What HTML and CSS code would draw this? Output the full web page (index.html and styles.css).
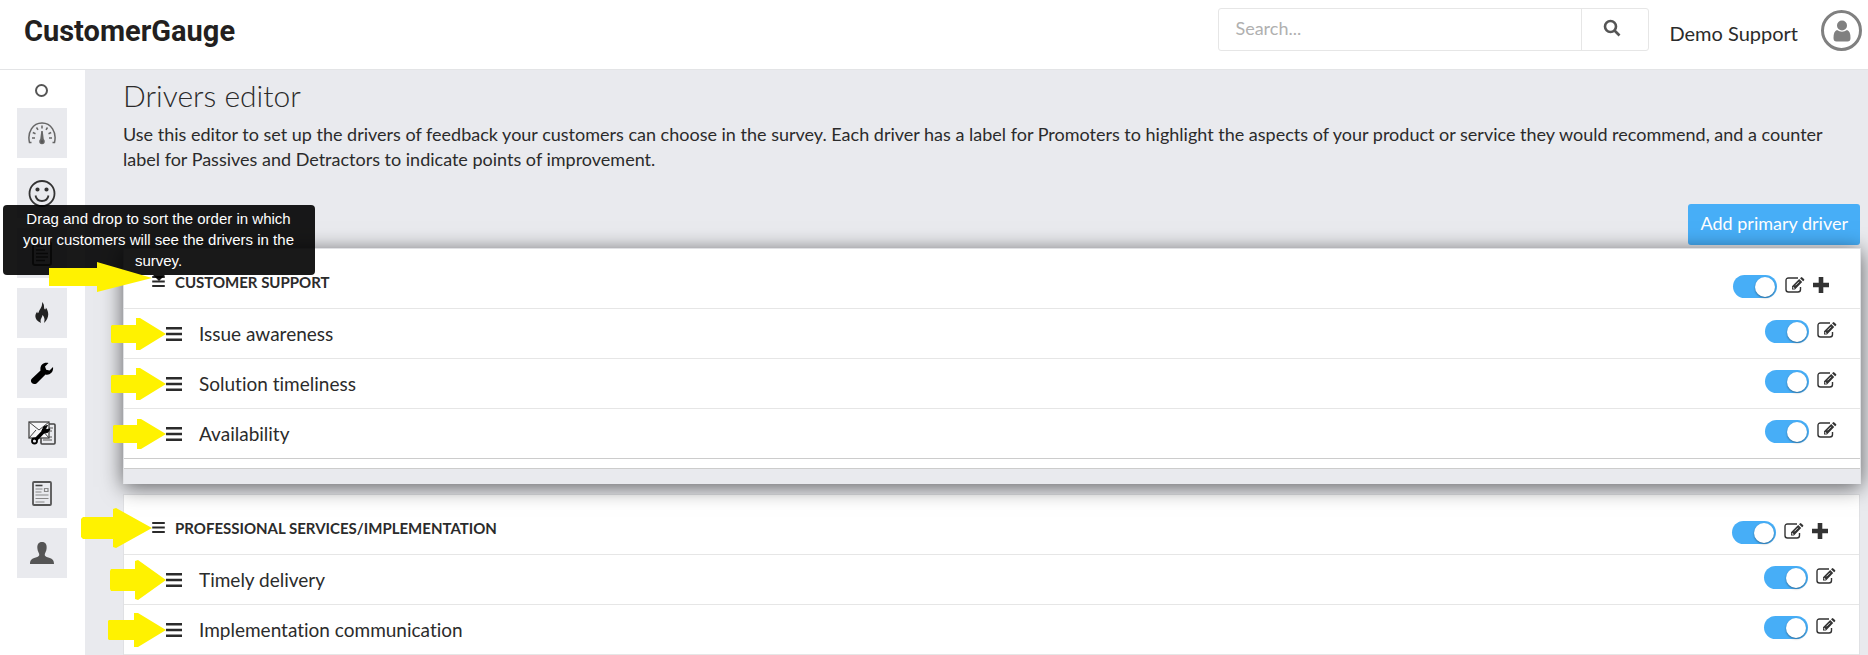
FILE: index.html
```html
<!DOCTYPE html>
<html lang="en">
<head>
    <meta charset="UTF-8">
    <meta name="viewport" content="width=device-width, initial-scale=1.0">
    <title>Drivers editor - CustomerGauge</title>
    <link rel="stylesheet" href="styles.css">
</head>
<body>
    <!-- shared icons -->
    <svg class="sprite" aria-hidden="true">
        <symbol id="icon-bars" viewBox="0 0 16 14">
            <path d="M0 0h16v2.600H0zM0 5.700h16v2.600H0zM0 11.400h16V14H0z"/>
        </symbol>
        <symbol id="icon-edit" viewBox="0 0 20 16">
            <path d="M13 1H3.500Q1 1 1 3.500v9Q1 15 3.500 15H13q2.500 0 2.500-2.500V10" fill="none" stroke="currentColor" stroke-width="1.400"/>
            <path d="M7 12.500V9.300L14.200 2l3 3-7.200 7.500zM15 1.300l.9-.9q.7-.6 1.400 0l1.700 1.600q.6.700 0 1.400l-.9.900z"/>
            <path d="M8.300 9.900v1.400h1.300M10.500 8.300l3.500-3.500" fill="none" stroke="#fff" stroke-width=".8"/>
        </symbol>
        <symbol id="icon-plus" viewBox="0 0 16 16">
            <path d="M5.700 0h4.600v5.700H16v4.600h-5.700V16H5.700v-5.700H0V5.700h5.700z"/>
        </symbol>
    </svg>

    <header class="header">
        <a href="#" class="logo">CustomerGauge</a>
        <form class="search" role="search">
            <input type="text" placeholder="Search..." aria-label="Search">
            <button type="button" aria-label="Search">
                <svg width="18" height="18" viewBox="0 0 18 18" fill="none" stroke="#555" stroke-width="2.600"><circle cx="7.500" cy="7.500" r="5.500"/><path d="M11.500 11.500l5 5"/></svg>
            </button>
        </form>
        <span class="user-name">Demo Support</span>
        <a href="#" class="avatar" aria-label="Profile">
            <svg width="18" height="22" viewBox="0 0 18 22"><circle cx="9" cy="5.500" r="5"/><path d="M4 10q5 3.500 10 0 3.500 1 3.500 8 0 3.500-3 3.500h-11q-3 0-3-3.500 0-7 3.500-8z"/></svg>
        </a>
    </header>

    <div class="layout">
        <nav class="sidebar">
            <a href="#" class="dot" aria-label="Collapse menu"></a>
            <a href="#" class="nav-item" aria-label="Dashboard">
                <svg width="28" height="28" viewBox="0 0 28 28" fill="none" stroke="#666" stroke-width="1.500"><path d="M3.500 23.500H1.500C-1 13 5 4 14 4s15 9 12.500 19.500h-2"/><path d="M14 6.500v3M8.500 8.500l1.500 2.300M19.500 8.500l-1.500 2.300M4.800 13.500l2.700 1.200M23.200 13.500l-2.700 1.200M4 19h3M24 19h-3"/><path d="M14 12l1 8h-2z" fill="#555"/><circle cx="14" cy="22.500" r="2" fill="#555"/></svg>
            </a>
            <a href="#" class="nav-item" aria-label="Customers">
                <svg width="28" height="28" viewBox="0 0 28 28" fill="none" stroke="#333" stroke-width="1.800"><circle cx="14" cy="14.500" r="12.500"/><path d="M7.500 16.500q1 5.500 6.500 5.500t6.500-5.500"/><circle cx="9.500" cy="10.500" r="1.200" fill="#333"/><circle cx="18.500" cy="10.500" r="1.200" fill="#333"/></svg>
            </a>
            <a href="#" class="nav-item" aria-label="Surveys">
                <svg width="20" height="25" viewBox="0 0 20 25" fill="none" stroke="#555"><rect x="1" y="1" width="18" height="23" rx="2" stroke-width="2"/><path d="M4 5h7M4 9h9M4 12.500h12M4 16h12M4 19.500h9" stroke-width="1.400"/></svg>
            </a>
            <a href="#" class="nav-item" aria-label="Hot issues">
                <svg width="14" height="22" viewBox="0 0 14 22" fill="#222"><path d="M7 0c3 3 1.500 5 2.500 7 .7 1 1.500 0 1.300-1.500 3.500 4.500 3.500 10.500-1.800 15.500 1-3.500.5-6-1.500-8-.2 3-3 4-1.500 8C-.5 18-1 13 2.500 9.500 2 11 3 12 3.500 10.500 4.500 7 8 4.500 7 0z"/></svg>
            </a>
            <a href="#" class="nav-item" aria-label="Tools">
                <svg width="24" height="24" viewBox="0 0 24 24"><path d="M1.500 18l9-8.500C9.700 4 13.500.8 18.500 2L15 5.500l1.200 3.300 3.300.7L23 6c.8 5-3 8.500-7.500 7.500L6.500 22.500c-3.500 2-7-1.500-5-4.500z"/></svg>
            </a>
            <a href="#" class="nav-item" aria-label="Survey setup">
                <svg width="28" height="24" viewBox="0 0 28 24" fill="none" stroke="#444" stroke-width="1.300"><rect x="13" y="3" width="14" height="20" rx="1" fill="#e9eaee" stroke-width="1.600"/><path d="M15 16h9M15 19h9M21 7h4M21 10h3" stroke="#888"/><rect x="1" y="1" width="20" height="16" fill="#f6f6f8"/><path d="M1 1l10 8 10-8M1 17l7-8M21 17l-7-8" stroke-width="1"/><path d="M7.500 19l9-9.500" stroke="#000" stroke-width="3.500"/><circle cx="6.500" cy="20" r="2.500" stroke="#000" stroke-width="1.800"/><path d="M19.500 4.500l-3.500 1-2 4 1.500 2.500 4-.5 2.500-3.500-3 .5-1.500-1z" fill="#000" stroke="#000" stroke-width="1"/></svg>
            </a>
            <a href="#" class="nav-item" aria-label="Reports">
                <svg width="20" height="25" viewBox="0 0 20 25" fill="none" stroke="#888"><rect x="1" y="1" width="18" height="23" rx="1" stroke="#555" stroke-width="1.800"/><path d="M3.500 4.500h7" stroke="#444" stroke-width="1.600"/><path d="M3.500 8h7M12.500 7.500h3.500v3h-3.500zM3.500 11h6M3.500 14h13M3.500 17.500h13M3.500 21h9" stroke-width="1.200"/></svg>
            </a>
            <a href="#" class="nav-item" aria-label="Users">
                <svg width="24" height="22" viewBox="0 0 24 22" fill="#555"><path d="M12 0c3.500 0 5 2.500 4.600 6.500-.3 3-1.400 4-1.800 5.500-.3 2 .7 2.500 2.700 3.200C22 16.500 24 17.500 24 22H0c0-4.500 2-5.500 6.500-6.800 2-.7 3-1.200 2.700-3.200-.4-1.500-1.500-2.500-1.800-5.500C7 2.500 8.500 0 12 0z"/></svg>
            </a>
        </nav>

        <main class="content">
            <h1>Drivers editor</h1>
            <p class="intro">Use this editor to set up the drivers of feedback your customers can choose in the survey. Each driver has a label for Promoters to highlight the aspects of your product or service they would recommend, and a counter label for Passives and Detractors to indicate points of improvement.</p>
            <div class="toolbar">
                <button type="button" class="btn-primary">Add primary driver</button>
            </div>

            <section class="group dragging">
                <div class="group-header">
                    <div class="handle">
                        <svg width="13" height="11"><use href="#icon-bars"/></svg>
                        <div class="tooltip" role="tooltip">Drag and drop to sort the order in which your customers will see the drivers in the survey.</div>
                        <svg class="arrow" width="104" height="40" viewBox="0 0 104 40"><path d="M1 6h48V0l55 16-55 14v-6H1z"/></svg>
                    </div>
                    <h2>Customer support</h2>
                    <div class="actions">
                        <input type="checkbox" class="switch" aria-label="Enable Customer support" checked>
                        <button type="button" class="icon-btn" aria-label="Edit"><svg width="20" height="16"><use href="#icon-edit"/></svg></button>
                        <button type="button" class="icon-btn" aria-label="Add driver"><svg width="16" height="16"><use href="#icon-plus"/></svg></button>
                    </div>
                </div>
                <ul class="drivers">
                    <li>
                        <div class="handle">
                            <svg width="16" height="14"><use href="#icon-bars"/></svg>
                            <svg class="arrow" width="56" height="32" viewBox="0 0 56 32"><path d="M2 7h24V0h4l26 16-26 16h-4v-7H2L1 24V8z"/></svg>
                        </div>
                        <span>Issue awareness</span>
                        <div class="actions">
                            <input type="checkbox" class="switch" aria-label="Enable Issue awareness" checked>
                            <button type="button" class="icon-btn" aria-label="Edit"><svg width="20" height="16"><use href="#icon-edit"/></svg></button>
                        </div>
                    </li>
                    <li>
                        <div class="handle">
                            <svg width="16" height="14"><use href="#icon-bars"/></svg>
                            <svg class="arrow" width="56" height="32" viewBox="0 0 56 32"><path d="M2 7h24V0h4l26 16-26 16h-4v-7H2L1 24V8z"/></svg>
                        </div>
                        <span>Solution timeliness</span>
                        <div class="actions">
                            <input type="checkbox" class="switch" aria-label="Enable Solution timeliness" checked>
                            <button type="button" class="icon-btn" aria-label="Edit"><svg width="20" height="16"><use href="#icon-edit"/></svg></button>
                        </div>
                    </li>
                    <li>
                        <div class="handle">
                            <svg width="16" height="14"><use href="#icon-bars"/></svg>
                            <svg class="arrow" width="54" height="30" viewBox="0 0 54 30"><path d="M2 6h23V0h4l25 15-25 15h-4v-6H2L1 23V7z"/></svg>
                        </div>
                        <span>Availability</span>
                        <div class="actions">
                            <input type="checkbox" class="switch" aria-label="Enable Availability" checked>
                            <button type="button" class="icon-btn" aria-label="Edit"><svg width="20" height="16"><use href="#icon-edit"/></svg></button>
                        </div>
                    </li>
                </ul>
                <div class="group-end"></div>
            </section>

            <section class="group">
                <div class="group-header">
                    <div class="handle">
                        <svg width="13" height="11"><use href="#icon-bars"/></svg>
                        <svg class="arrow" width="72" height="40" viewBox="0 0 72 40"><path d="M3 9h30V1l3-1 36 20-36 20-3-1v-8H3L1 29V11z"/></svg>
                    </div>
                    <h2>Professional Services/Implementation</h2>
                    <div class="actions">
                        <input type="checkbox" class="switch" aria-label="Enable Professional Services/Implementation" checked>
                        <button type="button" class="icon-btn" aria-label="Edit"><svg width="20" height="16"><use href="#icon-edit"/></svg></button>
                        <button type="button" class="icon-btn" aria-label="Add driver"><svg width="16" height="16"><use href="#icon-plus"/></svg></button>
                    </div>
                </div>
                <ul class="drivers">
                    <li>
                        <div class="handle">
                            <svg width="16" height="14"><use href="#icon-bars"/></svg>
                            <svg class="arrow" width="57" height="40" viewBox="0 0 57 40"><path d="M2 9h24V1l3-1 28 20-28 20-3-1v-8H2L1 29V11z"/></svg>
                        </div>
                        <span>Timely delivery</span>
                        <div class="actions">
                            <input type="checkbox" class="switch" aria-label="Enable Timely delivery" checked>
                            <button type="button" class="icon-btn" aria-label="Edit"><svg width="20" height="16"><use href="#icon-edit"/></svg></button>
                        </div>
                    </li>
                    <li>
                        <div class="handle">
                            <svg width="16" height="14"><use href="#icon-bars"/></svg>
                            <svg class="arrow" width="59" height="34" viewBox="0 0 59 34"><path d="M2 7h25V0h4l28 17-28 17h-4v-7H2L1 26V8z"/></svg>
                        </div>
                        <span>Implementation communication</span>
                        <div class="actions">
                            <input type="checkbox" class="switch" aria-label="Enable Implementation communication" checked>
                            <button type="button" class="icon-btn" aria-label="Edit"><svg width="20" height="16"><use href="#icon-edit"/></svg></button>
                        </div>
                    </li>
                </ul>
            </section>
        </main>
    </div>
</body>
</html>
```
FILE: styles.css
```css
* {
    box-sizing: border-box;
}
body {
    margin: 0;
    background: #e9eaee;
    color: #2b2b2b;
    font-family: Lato, sans-serif;
    font-size: 18px;
    font-variant-ligatures: none;
}
svg {
    display: block;
}
svg:not([fill]) {
    fill: currentColor;
}
.sprite {
    position: absolute;
    width: 0;
    height: 0;
}
button {
    font-family: inherit;
    cursor: pointer;
}

/* top bar */
.header {
    display: flex;
    align-items: center;
    height: 70px;
    padding: 0 6px 8px 24px;
    background: #fff;
    border-bottom: 1px solid #e3e4e6;
}
.logo {
    margin-right: auto;
    color: #231f20;
    font-family: Roboto, sans-serif;
    font-size: 29px;
    font-weight: 700;
    text-decoration: none;
}
.search {
    display: flex;
    width: 431px;
    height: 43px;
    margin: 0 20px 2px 0;
    border: 1px solid #e6e6e6;
    border-radius: 3px;
}
.search input {
    flex: 1;
    min-width: 0;
    padding: 0 16px 4px;
    border: 0;
    background: none;
    font-family: inherit;
    font-size: 18px;
}
.search input::placeholder {
    color: #b0b0b0;
}
.search button {
    display: flex;
    align-items: center;
    justify-content: center;
    width: 67px;
    padding: 0 6px 4px 0;
    border: 0;
    border-left: 1px solid #e6e6e6;
    background: none;
}
.user-name {
    margin: 4px 23px 0 0;
    font-size: 20px;
}
.avatar {
    display: flex;
    align-items: center;
    justify-content: center;
    width: 41px;
    height: 41px;
    border: 3px solid #808080;
    border-radius: 50%;
    color: #808080;
}

/* layout */
.layout {
    display: flex;
    min-height: calc(100vh - 70px);
}
.sidebar {
    display: flex;
    flex-direction: column;
    align-items: center;
    gap: 10px;
    width: 85px;
    flex-shrink: 0;
    padding: 14px 1px 0 0;
    background: #fff;
}
.dot {
    width: 13px;
    height: 13px;
    margin: 0 1px 1px 0;
    border: 2px solid #555;
    border-radius: 50%;
}
.nav-item {
    display: flex;
    align-items: center;
    justify-content: center;
    width: 50px;
    height: 50px;
    background: #e9eaee;
    color: #000;
}
.content {
    flex: 1;
    min-width: 0;
    padding: 8px 8px 0 38px;
}
h1 {
    margin: 0;
    font-size: 30px;
    font-weight: 300;
    line-height: 34px;
}
.intro {
    margin: 10px 0 32px;
    line-height: 25px;
}
.toolbar {
    display: flex;
    justify-content: flex-end;
}
.btn-primary {
    height: 41px;
    padding: 0 12px 4px;
    border: 0;
    border-radius: 3px;
    background: #47aef7;
    color: #fff;
    font-size: 18px;
}

/* driver groups */
.group {
    margin-bottom: 10px;
    border: 1px solid #e0e1e4;
    background: #fff;
}
.toolbar + .group {
    margin-top: 3px;
}
.dragging {
    position: relative;
    z-index: 1;
    margin-right: -1px;
    border-bottom-color: #e9eaee;
    box-shadow: 0 3px 20px rgba(0, 0, 0, 0.6);
}
.group-header {
    display: flex;
    align-items: center;
    height: 60px;
    padding: 6px 31px 0 28px;
    border-bottom: 1px solid #e6e6e6;
}
.group-header h2 {
    margin: 0 auto 0 10px;
    font-size: 15px;
    font-weight: 700;
    line-height: 20px;
    text-transform: uppercase;
}
.drivers {
    margin: 0;
    padding: 0;
    list-style: none;
}
.drivers li {
    display: flex;
    align-items: center;
    height: 50px;
    padding: 0 23px 0 42px;
    border-bottom: 1px solid #e6e6e6;
}
.dragging li:last-child {
    border-color: #ccc;
}
.drivers span {
    margin: 0 auto 0 17px;
    font-size: 19px;
}
.group-end {
    height: 24px;
    border-top: 9px solid #fff;
    background: #e9eaee;
    box-shadow: inset 0 1px #ccc;
}
.handle {
    position: relative;
    cursor: move;
}
.actions {
    display: flex;
    align-items: center;
    gap: 8px;
}
.group-header .actions {
    padding-top: 10px;
}
.drivers .actions {
    padding-bottom: 4px;
}
.icon-btn {
    padding: 0;
    border: 0;
    background: none;
    color: #333;
}
.actions .icon-btn {
    margin-bottom: 4px;
}

/* toggle */
.switch {
    appearance: none;
    width: 44px;
    height: 23px;
    margin: 0;
    border-radius: 12px;
    background: #47aef7;
    cursor: pointer;
}
.switch::before {
    content: "";
    display: block;
    width: 20px;
    height: 20px;
    margin: 2px 0 0 22px;
    border-radius: 50%;
    background: #fff;
    box-shadow: 0 1px 2px rgba(0, 0, 0, 0.4);
}

/* overlays on the drag handles */
.handle .arrow {
    position: absolute;
    z-index: 2;
    top: 50%;
    right: 100%;
    transform: translateY(-50%);
    fill: #fff200;
}
.tooltip {
    position: absolute;
    z-index: 2;
    bottom: 100%;
    left: 50%;
    width: 312px;
    margin-bottom: 1px;
    padding: 3px 12px 4px;
    transform: translateX(-50%);
    border-radius: 4px;
    background: rgba(0, 0, 0, 0.9);
    color: #fff;
    font-family: "Liberation Sans", sans-serif;
    font-size: 15px;
    line-height: 21px;
    text-align: center;
}
.tooltip::after {
    content: "";
    position: absolute;
    top: 100%;
    left: 50%;
    margin-left: -6px;
    border: 6px solid transparent;
    border-top-color: rgba(0, 0, 0, 0.9);
    border-bottom: 0;
}
```
